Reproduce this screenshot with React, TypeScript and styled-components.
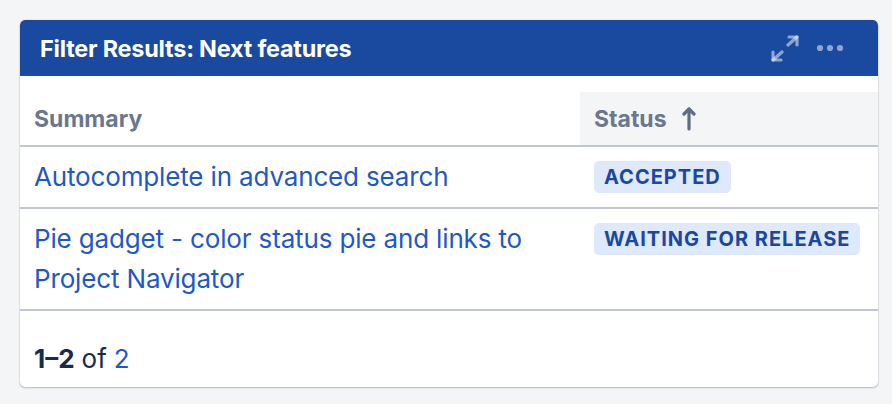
import React from "react";
import styled, { createGlobalStyle } from "styled-components";

const Global = createGlobalStyle`
  html, body { margin: 0; padding: 0; background: #f4f5f7; }
  body { font-family: Inter, "Noto Sans", sans-serif; -webkit-font-smoothing: antialiased; }
`;

const Page = styled.div`
  padding: 20px 14px 0 20px;
  width: 892px;
  height: 404px;
  box-sizing: border-box;
`;

const Card = styled.section`
  width: 858px;
  background: #ffffff;
  border-radius: 5px;
  box-shadow: 0 1px 2px rgba(9, 30, 66, 0.25), 0 0 1px rgba(9, 30, 66, 0.31);
  overflow: hidden;
`;

const Header = styled.header`
  height: 56px;
  background: #1a4a9f;
  display: flex;
  align-items: center;
  justify-content: space-between;
  padding: 0 34px 0 20px;
  border-radius: 5px 5px 0 0;
`;

const Title = styled.h2`
  margin: 0;
  color: #ffffff;
  font-size: 23.4px;
  font-weight: 700;
  letter-spacing: -0.2px;
`;

const Actions = styled.div`
  display: flex;
  align-items: center;
  gap: 17px;
  color: rgba(255, 255, 255, 0.5);
`;

const Table = styled.table`
  width: 100%;
  border-collapse: collapse;
  margin-top: 16px;
  table-layout: fixed;
`;

const Th = styled.th<{ $sorted?: boolean; $w?: number }>`
  text-align: left;
  height: 54px;
  padding: 0 14px;
  font-size: 23px;
  font-weight: 700;
  color: #6b778c;
  background: ${(p) => (p.$sorted ? "#f4f5f7" : "transparent")};
  border-bottom: 2px solid #c1c7d0;
  width: ${(p) => (p.$w ? `${p.$w}px` : "auto")};
  box-sizing: border-box;
  vertical-align: middle;
`;

const HeadInner = styled.span`
  display: inline-flex;
  align-items: center;
  gap: 15px;
`;

const Td = styled.td`
  padding: 10px 14px;
  vertical-align: top;
  border-bottom: 2px solid #c1c7d0;
  font-size: 26px;
  line-height: 40px;
`;

const Link = styled.a`
  color: #1f58c9;
  text-decoration: none;
  letter-spacing: -0.15px;
`;

const LozengeCell = styled.div`
  height: 40px;
  display: flex;
  align-items: center;
`;

const Lozenge = styled.span`
  display: inline-block;
  background: #dfe9fc;
  color: #1b47a0;
  font-size: 20px;
  font-weight: 700;
  line-height: 32px;
  height: 32px;
  padding: 0 10px;
  border-radius: 5px;
  text-transform: uppercase;
  letter-spacing: 1px;
  white-space: nowrap;
`;

const Footer = styled.footer`
  height: 76px;
  display: flex;
  align-items: center;
  padding: 0 14px;
  font-size: 26px;
  color: #172b4d;
  padding-top: 18px;
  box-sizing: border-box;
`;

const Strong = styled.b`
  font-weight: 700;
  margin-right: 7px;
`;

const FooterLink = styled.a`
  color: #1f58c9;
  text-decoration: none;
  margin-left: 7px;
`;

const ExpandIcon = () => (
  <svg width="28" height="27" viewBox="0 0 28 27" fill="none" stroke="currentColor" strokeWidth="3.2" strokeLinecap="round" strokeLinejoin="round">
    <path d="M17 10 L26 2" />
    <path d="M18 2 H26 V10" />
    <path d="M11 17 L2 25" />
    <path d="M2 17 V25 H10" />
  </svg>
);

const DotsIcon = () => (
  <svg width="28" height="8" viewBox="0 0 28 8" fill="currentColor">
    <circle cx="4" cy="4" r="3.1" />
    <circle cx="14" cy="4" r="3.1" />
    <circle cx="24" cy="4" r="3.1" />
  </svg>
);

const SortArrow = () => (
  <svg width="14" height="25" viewBox="0 0 14 25" fill="none" stroke="#5e6c84" strokeWidth="3.2" strokeLinecap="round" strokeLinejoin="round">
    <path d="M7 23 V3" />
    <path d="M2 8 L7 3 L12 8" />
  </svg>
);

const rows = [
  { summary: "Autocomplete in advanced search", status: "Accepted" },
  { summary: "Pie gadget - color status pie and links to Project Navigator", status: "Waiting for release" },
];

export default function App() {
  return (
    <>
      <Global />
      <Page>
        <Card>
          <Header>
            <Title>Filter Results: Next features</Title>
            <Actions>
              <ExpandIcon />
              <DotsIcon />
            </Actions>
          </Header>
          <Table>
            <thead>
              <tr>
                <Th $w={560}>Summary</Th>
                <Th $sorted>
                  <HeadInner>
                    Status
                    <SortArrow />
                  </HeadInner>
                </Th>
              </tr>
            </thead>
            <tbody>
              {rows.map((r) => (
                <tr key={r.summary}>
                  <Td>
                    <Link href="#">{r.summary}</Link>
                  </Td>
                  <Td>
                    <LozengeCell>
                      <Lozenge>{r.status}</Lozenge>
                    </LozengeCell>
                  </Td>
                </tr>
              ))}
            </tbody>
          </Table>
          <Footer>
            <Strong>1–2</Strong>of<FooterLink href="#">2</FooterLink>
          </Footer>
        </Card>
      </Page>
    </>
  );
}
